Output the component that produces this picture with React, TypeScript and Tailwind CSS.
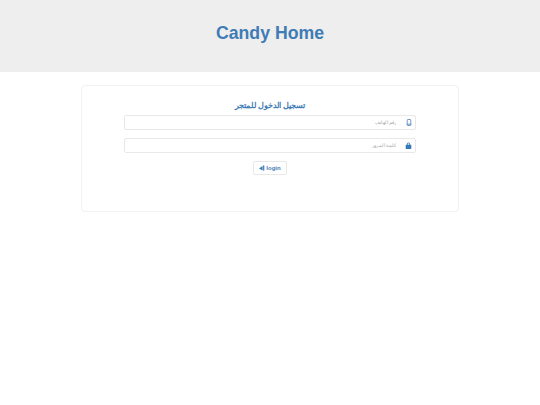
import React from 'react';

const PhoneIcon = () => (
  <svg width="6" height="7" viewBox="0 0 6 7" fill="none" stroke="#4a84ba" strokeWidth="0.8">
    <rect x="1.2" y="0.5" width="3.6" height="6" rx="0.7" />
    <path d="M0.8 5.2h4.4" />
  </svg>
);

const LockIcon = () => (
  <svg width="7" height="7" viewBox="0 0 7 7" fill="#337ab7">
    <path d="M0.7 2.8h5.6v3.8a0.4 0.4 0 0 1-0.4 0.4H1.1a0.4 0.4 0 0 1-0.4-0.4z" />
    <path d="M1.9 3V2a1.6 1.6 0 0 1 3.2 0v1h-0.8V2a0.8 0.8 0 0 0-1.6 0v1z" />
  </svg>
);

const LoginIcon = () => (
  <svg width="6" height="6" viewBox="0 0 6 6" fill="#3f7cb5">
    <path d="M0 3.6L3.6 1v4.4z" />
    <rect x="4.1" y="0.4" width="1.2" height="5.2" />
  </svg>
);

const LoginField = ({ placeholder, icon }: { placeholder: string; icon: React.ReactNode }) => (
  <div className="flex h-[15px] w-full items-stretch rounded-[2px] border border-[#e8e8e8] bg-white" dir="rtl">
    <span className="flex w-[13px] shrink-0 items-center justify-center">{icon}</span>
    <input
      type="text"
      placeholder={placeholder}
      className="min-w-0 flex-1 bg-transparent pr-[6px] text-[4.5px] leading-none text-[#555555] outline-none placeholder:text-[#aaaaaa]"
    />
  </div>
);

export default function App() {
  return (
    <div className="min-h-[405px] bg-white font-['Liberation_Sans',sans-serif]">
      <header className="flex h-[72px] justify-center bg-[#eeeeee] pt-[20.5px]">
        <h1 className="text-[17.7px] leading-[25px] font-bold text-[#3f7cb5]">Candy Home</h1>
      </header>

      <main className="mx-auto mt-[13px] h-[127px] w-[378px] rounded-[4px] border border-[#f2f2f2] bg-white px-[42px] pt-[13px]">
        <h2 className="mb-[3px] text-center text-[8.4px] leading-[13px] font-bold text-[#3f7cb5]" dir="rtl">
          تسجيل الدخول للمتجر
        </h2>
        <div className="flex flex-col gap-[7.5px]">
          <LoginField placeholder="رقم الهاتف" icon={<PhoneIcon />} />
          <LoginField placeholder="كلمة المرور" icon={<LockIcon />} />
        </div>
        <div className="mt-[8.5px] flex justify-center">
          <button className="flex h-[14px] w-[34px] items-center justify-center gap-[1px] rounded-[2px] border border-[#e8e8e8] bg-white text-[6px] font-bold text-[#3f7cb5]">
            <LoginIcon />
            login
          </button>
        </div>
      </main>
    </div>
  );
}
